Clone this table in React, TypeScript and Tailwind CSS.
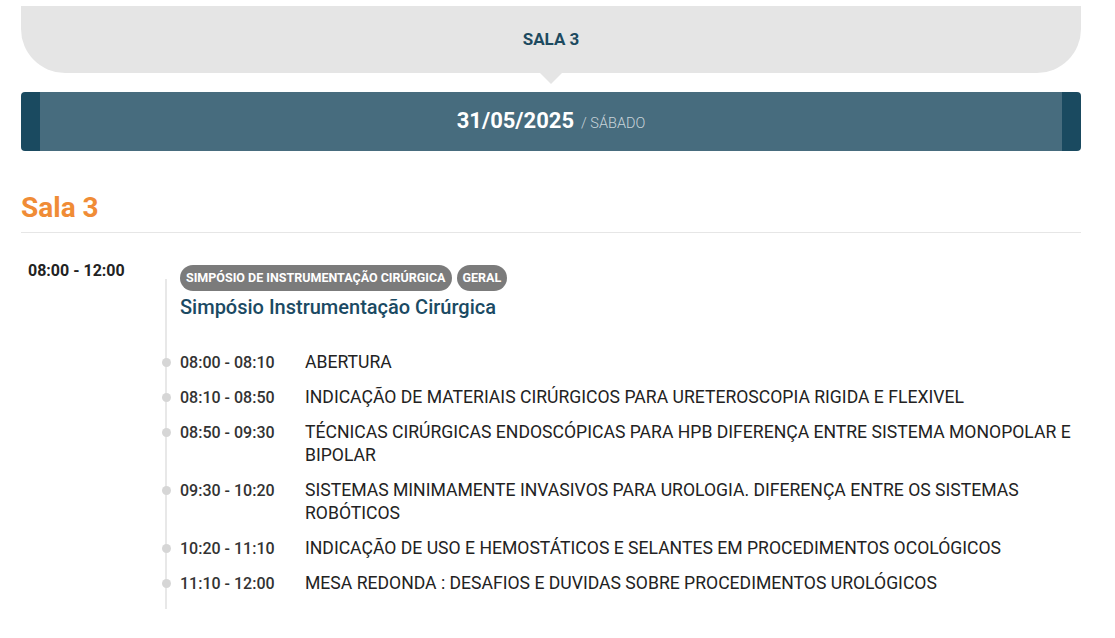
import React from 'react';

const sessions = [
  { time: '08:00 - 08:10', title: 'ABERTURA' },
  { time: '08:10 - 08:50', title: 'INDICAÇÃO DE MATERIAIS CIRÚRGICOS PARA URETEROSCOPIA RIGIDA E FLEXIVEL' },
  { time: '08:50 - 09:30', title: 'TÉCNICAS CIRÚRGICAS ENDOSCÓPICAS PARA HPB DIFERENÇA ENTRE SISTEMA MONOPOLAR E BIPOLAR' },
  { time: '09:30 - 10:20', title: 'SISTEMAS MINIMAMENTE INVASIVOS PARA UROLOGIA. DIFERENÇA ENTRE OS SISTEMAS ROBÓTICOS' },
  { time: '10:20 - 11:10', title: 'INDICAÇÃO DE USO E HEMOSTÁTICOS E SELANTES EM PROCEDIMENTOS OCOLÓGICOS' },
  { time: '11:10 - 12:00', title: 'MESA REDONDA : DESAFIOS E DUVIDAS SOBRE PROCEDIMENTOS UROLÓGICOS' },
];

const Tag = ({ label }: { label: string }) => (
  <span className="h-[26px] flex items-center px-[6px] rounded-full bg-[#7b7b7b] text-white text-[12.5px] font-bold leading-none">
    {label}
  </span>
);

export default function App() {
  return (
    <div className="min-h-[638px] bg-white font-['Roboto',sans-serif]">
      <div className="ml-[21px] w-[1060px] pt-[6px]">
        {/* Room tab */}
        <div className="relative">
          <div className="h-[67px] bg-[#e5e5e5] rounded-b-[44px] flex items-center justify-center">
            <span className="text-[17px] font-bold text-[#1d4a60]">SALA 3</span>
          </div>
          <div className="absolute left-[519px] top-[67px] w-0 h-0 border-x-[11px] border-x-transparent border-t-[11px] border-t-[#e5e5e5]" />
        </div>

        {/* Date bar */}
        <div className="mt-[19px] h-[59px] flex rounded-[4px] overflow-hidden">
          <div className="w-[19px] bg-[#1a4a60]" />
          <div className="flex-1 bg-[#476c7e] flex items-baseline justify-center pt-[14px]">
            <span className="text-[22px] font-bold text-white leading-[30px]">31/05/2025</span>
            <span className="ml-[7px] text-[14.5px] font-light text-[#c9d4da]">/ SÁBADO</span>
          </div>
          <div className="w-[19px] bg-[#1a4a60]" />
        </div>

        {/* Room heading */}
        <h2 className="mt-[40px] pb-[8px] border-b border-[#e6e6e6] text-[28px] leading-[33px] font-bold text-[#f08c36]">
          Sala 3
        </h2>

        {/* Program */}
        <div className="mt-[26px] flex">
          <div className="w-[144px] pl-[7px] text-[16px] leading-[24px] font-bold text-[#222]">
            08:00 - 12:00
          </div>
          <div className="relative flex-1 pl-[15px] pt-[6px] pb-[14px]">
            <div className="absolute left-0 top-[20px] bottom-0 w-[2px] bg-[#e8e8e8]" />
            <div className="flex gap-[5px]">
              <Tag label="SIMPÓSIO DE INSTRUMENTAÇÃO CIRÚRGICA" />
              <Tag label="GERAL" />
            </div>
            <h3 className="mt-[3px] text-[20px] leading-[26px] font-medium text-[#1b4a63]">
              Simpósio Instrumentação Cirúrgica
            </h3>
            <ul className="mt-[31px] flex flex-col gap-[12px]">
              {sessions.map((s) => (
                <li key={s.time} className="relative flex leading-[23px]">
                  <span className="absolute left-[-18px] top-[7px] w-[9px] h-[9px] rounded-full bg-[#d6d6d6]" />
                  <span className="w-[125px] shrink-0 text-[16px] font-medium text-[#333]">{s.time}</span>
                  <span className="flex-1 text-[17.6px] text-[#222]">{s.title}</span>
                </li>
              ))}
            </ul>
          </div>
        </div>
      </div>
    </div>
  );
}
